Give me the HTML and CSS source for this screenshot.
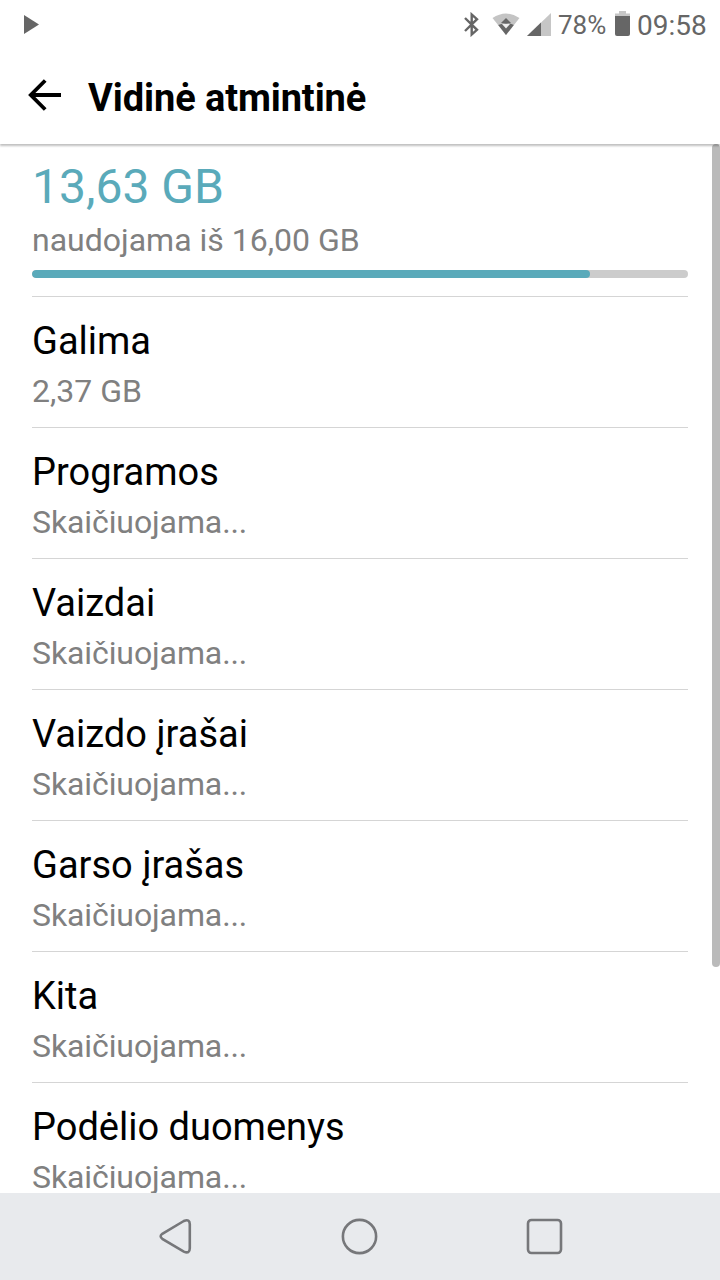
FILE: index.html
```html
<!DOCTYPE html>
<html lang="lt">
<head>
<meta charset="utf-8">
<title>Vidinė atmintinė</title>
<link rel="stylesheet" href="styles.css">
</head>
<body>
<div class="screen">
  <div class="status">
    <svg class="play" width="15" height="19" viewBox="0 0 15 19"><path d="M0 0L15 9.500L0 19Z" fill="#666"/></svg>
    <div class="indicators">
      <svg class="bluetooth" width="15" height="25" viewBox="0 0 15 25" fill="none" stroke="#666" stroke-width="2.400"><path d="M1 6L13 17.800L7.700 22.500V2.500L13 7.200L1 19"/></svg>
      <svg class="wifi" width="28" height="23" viewBox="0 0 28 23"><path d="M.5 5Q14-4 27.500 5L14 22Z" fill="#c4c4c4"/><path d="M6.200 12Q14 8.500 21.800 12L14 22Z" fill="#666"/><path d="M9 10L14 5L19 10Z" fill="#666"/><path d="M10 11H18L14 15.500Z" fill="#eee"/></svg>
      <svg class="signal" width="24" height="23" viewBox="0 0 24 23"><path d="M0 23L24 0V23Z" fill="#c6c6c6"/><path d="M0 23L14 9.600V23Z" fill="#666"/></svg>
      <span class="percent">78%</span>
      <svg class="battery" width="15" height="25" viewBox="0 0 15 25"><path d="M4 0H11V2.500H15V5H0V2.500H4Z" fill="#c6c6c6"/><path d="M0 5H15V23Q15 25 13 25H2Q0 25 0 23Z" fill="#666"/></svg>
      <span class="clock">09:58</span>
    </div>
  </div>
  <header class="header">
    <svg class="back" width="33" height="32" viewBox="0 0 33 32" fill="none" stroke="#000" stroke-width="3.800"><path d="M17.200 1.500L2.800 16L17.200 30.500M2.800 16H33"/></svg>
    <h1 class="title">Vidinė atmintinė</h1>
  </header>
  <main class="content">
    <section class="summary">
      <div class="used">13,63 GB</div>
      <div class="total">naudojama iš 16,00 GB</div>
      <div class="bar"><div class="fill" style="width:85.1%"></div></div>
    </section>
    <div class="row"><div class="name">Galima</div><div class="value">2,37 GB</div></div>
    <div class="row"><div class="name">Programos</div><div class="value pending">Skaičiuojama...</div></div>
    <div class="row"><div class="name">Vaizdai</div><div class="value pending">Skaičiuojama...</div></div>
    <div class="row"><div class="name">Vaizdo įrašai</div><div class="value pending">Skaičiuojama...</div></div>
    <div class="row"><div class="name">Garso įrašas</div><div class="value pending">Skaičiuojama...</div></div>
    <div class="row"><div class="name">Kita</div><div class="value pending">Skaičiuojama...</div></div>
    <div class="row"><div class="name">Podėlio duomenys</div><div class="value pending">Skaičiuojama...</div></div>
    <div class="scrollbar"></div>
  </main>
  <nav class="nav">
    <svg width="40" height="40" viewBox="0 0 40 40"><path d="M28.800 4L7.300 16.800Q4 19.300 7.300 21.800L28.800 34.600Q34.800 37.100 34.800 31.300V7.300Q34.800 1.500 28.800 4Z"/></svg>
    <svg width="40" height="40" viewBox="0 0 40 40"><circle cx="19.500" cy="19.500" r="16.600"/></svg>
    <svg width="40" height="40" viewBox="0 0 40 40"><rect x="3" y="3" width="33" height="33" rx="3.500"/></svg>
  </nav>
</div>
</body>
</html>
```
FILE: styles.css
```css
* { box-sizing: border-box; }
body { margin: 0; background: #fff; font-family: Roboto, "Noto Sans", sans-serif; }
svg { display: block; flex: none; }
.screen { width: 720px; height: 1280px; display: flex; flex-direction: column; overflow: hidden; }
.status { height: 50px; flex: none; display: flex; justify-content: space-between; padding: 0 11px 0 24px; color: #666; }
.play { margin-top: 15px; }
.indicators { display: flex; align-items: flex-start; }
.bluetooth { margin: 12px 13px 0 0; }
.wifi { margin: 13px 7px 0 0; }
.signal { margin: 13px 7px 0 0; }
.percent { width: 50px; margin-right: 7px; font-size: 26px; line-height: 30px; margin-top: 10px; white-space: nowrap; }
.battery { margin: 11px 7px 0 0; }
.clock { width: 72px; font-size: 28px; line-height: 32px; margin-top: 10px; }
.header { height: 94px; flex: none; display: flex; align-items: flex-start; padding-left: 28px; background: #fff; box-shadow: 0 2px 2px rgba(0,0,0,.25); position: relative; z-index: 1; }
.back { margin-top: 29px; }
.title { margin: 26px 0 0 27px; font-size: 38px; line-height: 44px; font-weight: 700; letter-spacing: -.1px; }
.content { flex: 1; min-height: 0; overflow: hidden; position: relative; z-index: 0; padding: 0 32px; }
.summary { height: 153px; padding-top: 15px; border-bottom: 1px solid #d5d5d5; }
.used { font-size: 48px; line-height: 56px; color: #5aaaba; }
.total { margin-top: 6px; font-size: 32px; line-height: 38px; color: #808080; }
.bar { height: 8px; margin-top: 11px; border-radius: 4px; background: #ccc; overflow: hidden; }
.fill { height: 8px; border-radius: 4px; background: #5aaaba; }
.row { height: 131px; padding-top: 22px; border-bottom: 1px solid #d5d5d5; }
.name { font-size: 38px; line-height: 44px; color: #000; }
.value { margin-top: 9px; font-size: 32px; line-height: 38px; color: #808080; }
.pending { letter-spacing: -.1px; }
.scrollbar { position: absolute; z-index: 2; top: 0; right: 0; width: 8px; height: 823px; border-radius: 4px; background: #bababa; }
.nav { height: 87px; flex: none; display: flex; justify-content: center; gap: 145px; padding-top: 24px; background: #e8eaed; }
.nav svg { fill: none; stroke: #76777a; stroke-width: 2.6px; }
```
